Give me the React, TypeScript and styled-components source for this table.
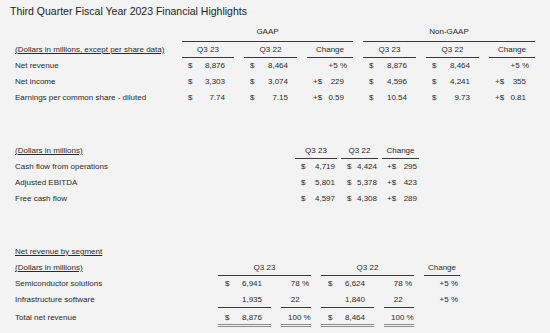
import React from "react";
import styled, { createGlobalStyle } from "styled-components";

const RULE = "#3a3a3a";
const DOUBLE = "#8c8c8c";
const BG = "#f3f3f3";

const GlobalStyle = createGlobalStyle`
  html, body {
    margin: 0;
    padding: 0;
    background: ${BG};
  }
  body {
    font-family: "Liberation Sans", Arial, sans-serif;
    color: #2a2a2a;
  }
`;

const Page = styled.div`
  width: 550px;
  height: 333px;
  overflow: hidden;
  padding-top: 5px;
  box-sizing: border-box;
  background: ${BG};
`;

const Title = styled.h1`
  margin: 0 0 0 10px;
  font-size: 10.5px;
  line-height: 12px;
  font-weight: normal;
  color: #222;
`;

const Grid = styled.div<{ $cols: string; $rows: string; $gap: number; $mt: number }>`
  display: grid;
  grid-template-columns: ${(p) => p.$cols};
  grid-template-rows: ${(p) => p.$rows};
  column-gap: ${(p) => p.$gap}px;
  margin: ${(p) => p.$mt}px 0 0 15px;
  font-size: 8px;
  line-height: 10px;
`;

const Blank = styled.div<{ $span?: number }>`
  grid-column: span ${(p) => p.$span ?? 1};
`;

const GroupHead = styled.div<{ $span: number }>`
  grid-column: span ${(p) => p.$span};
  display: flex;
  align-items: center;
  justify-content: center;
  padding-bottom: 2px;
  box-shadow: inset 0 -1px 0 ${RULE};
`;

const ColHead = styled.div<{ $span?: number }>`
  grid-column: span ${(p) => p.$span ?? 1};
  display: flex;
  align-items: center;
  justify-content: center;
  white-space: nowrap;
  box-shadow: inset 0 -1px 0 ${RULE};
`;

const Label = styled.div<{ $underline?: boolean; $span?: number }>`
  grid-column: span ${(p) => p.$span ?? 1};
  display: flex;
  align-items: center;
  white-space: nowrap;
  text-decoration: ${(p) => (p.$underline ? "underline" : "none")};
`;

type Rule = "single" | "double" | undefined;

const Amount = styled.div<{ $pl: number; $pr: number; $rule?: Rule }>`
  display: flex;
  align-items: center;
  justify-content: space-between;
  white-space: nowrap;
  padding: 0 ${(p) => p.$pr}px 0 ${(p) => p.$pl}px;
  box-shadow: ${(p) =>
    p.$rule === "single"
      ? `inset 0 -1px 0 ${RULE}`
      : p.$rule === "double"
      ? `inset 0 -1px 0 ${DOUBLE}, inset 0 -2px 0 ${BG}, inset 0 -3px 0 ${DOUBLE}`
      : "none"};
`;

const Hang = styled.span`
  visibility: hidden;
`;

type Cell = { pre?: string; val: string; pct?: boolean; hang?: boolean; rule?: Rule };

const money = (pre: string, val: string): Cell => ({ pre, val });
const plain = (val: string, rule?: Rule): Cell => ({ val, rule });
const pct = (val: string): Cell => ({ val, pct: true });

const renderCell = (c: Cell, key: number, pl: number, pr: number, pctPr: number) => (
  <Amount key={key} $pl={pl} $pr={c.pct ? pctPr : pr} $rule={c.rule}>
    <span>{c.pre ?? ""}</span>
    <span>
      {c.val}
      {c.hang && <Hang>&nbsp;%</Hang>}
    </span>
  </Amount>
);

const highlights: { label: string; cells: Cell[] }[] = [
  {
    label: "Net revenue",
    cells: [money("$", "8,876"), money("$", "8,464"), pct("+5 %"), money("$", "8,876"), money("$", "8,464"), pct("+5 %")],
  },
  {
    label: "Net income",
    cells: [money("$", "3,303"), money("$", "3,074"), money("+$", "229"), money("$", "4,596"), money("$", "4,241"), money("+$", "355")],
  },
  {
    label: "Earnings per common share - diluted",
    cells: [money("$", "7.74"), money("$", "7.15"), money("+$", "0.59"), money("$", "10.54"), money("$", "9.73"), money("+$", "0.81")],
  },
];

const cashRows: { label: string; cells: Cell[] }[] = [
  { label: "Cash flow from operations", cells: [money("$", "4,719"), money("$", "4,424"), money("+$", "295")] },
  { label: "Adjusted EBITDA", cells: [money("$", "5,801"), money("$", "5,378"), money("+$", "423")] },
  { label: "Free cash flow", cells: [money("$", "4,597"), money("$", "4,308"), money("+$", "289")] },
];

const segRows: { label: string; cells: Cell[] }[] = [
  {
    label: "Semiconductor solutions",
    cells: [money("$", "6,941"), { val: "78 %" }, money("$", "6,624"), { val: "78 %" }, { val: "+5 %" }],
  },
  {
    label: "Infrastructure software",
    cells: [
      plain("1,935", "single"),
      { val: "22", hang: true, rule: "single" },
      plain("1,840", "single"),
      { val: "22", hang: true, rule: "single" },
      { val: "+5 %" },
    ],
  },
  {
    label: "Total net revenue",
    cells: [
      { pre: "$", val: "8,876", rule: "double" },
      { val: "100 %", rule: "double" },
      { pre: "$", val: "8,464", rule: "double" },
      { val: "100 %", rule: "double" },
      { val: "" },
    ],
  },
];

export default function App() {
  return (
    <>
      <GlobalStyle />
      <Page>
        <Title>Third Quarter Fiscal Year 2023 Financial Highlights</Title>

        <Grid
          $mt={7}
          $gap={10}
          $cols="157px 52px 53px 46px 53px 53px 46px"
          $rows="18px 16px repeat(3, 16px)"
        >
          <Blank />
          <GroupHead $span={3}>GAAP</GroupHead>
          <GroupHead $span={3}>Non-GAAP</GroupHead>

          <Label $underline>(Dollars in millions, except per share data)</Label>
          <ColHead>Q3 23</ColHead>
          <ColHead>Q3 22</ColHead>
          <ColHead>Change</ColHead>
          <ColHead>Q3 23</ColHead>
          <ColHead>Q3 22</ColHead>
          <ColHead>Change</ColHead>

          {highlights.map((r) => (
            <React.Fragment key={r.label}>
              <Label>{r.label}</Label>
              {r.cells.map((c, i) => renderCell(c, i, 6, 9, 6))}
            </React.Fragment>
          ))}
        </Grid>

        <Grid $mt={37} $gap={4} $cols="276px 42px 37px 37px" $rows="16px repeat(3, 16px)">
          <Label $underline>(Dollars in millions)</Label>
          <ColHead>Q3 23</ColHead>
          <ColHead>Q3 22</ColHead>
          <ColHead>Change</ColHead>

          {cashRows.map((r) => (
            <React.Fragment key={r.label}>
              <Label>{r.label}</Label>
              {r.cells.map((c, i) => renderCell(c, i, i === 2 ? 5 : 6, i === 1 ? 1 : 2, 2))}
            </React.Fragment>
          ))}
        </Grid>

        <Grid
          $mt={37}
          $gap={10}
          $cols="193px 53px 30px 53px 30px 36px"
          $rows="16px 16px 16px 16px 19px"
        >
          <Label $underline $span={6}>Net revenue by segment</Label>

          <Label $underline>(Dollars in millions)</Label>
          <ColHead $span={2}>Q3 23</ColHead>
          <ColHead $span={2}>Q3 22</ColHead>
          <ColHead>Change</ColHead>

          {segRows.map((r) => (
            <React.Fragment key={r.label}>
              <Label>{r.label}</Label>
              {r.cells.map((c, i) => renderCell(c, i, 7, i % 2 === 0 && i < 4 ? 9 : 2, 2))}
            </React.Fragment>
          ))}
        </Grid>
      </Page>
    </>
  );
}
